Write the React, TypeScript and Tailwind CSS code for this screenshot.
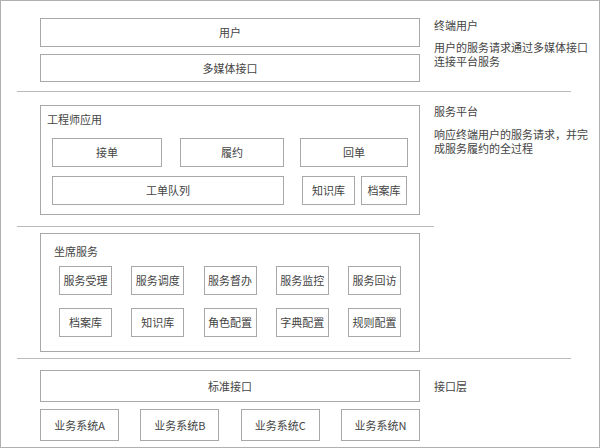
import React from "react";

const B = ({ children, className = "" }: { children: React.ReactNode; className?: string }) => (
  <div className={"border border-[#a8a8a8] flex items-center justify-center text-[11px] text-[#444] bg-white " + className}>{children}</div>
);

export default function App() {
  return (
    <div className="w-[600px] h-[448px] border border-[#b0b0b0] bg-white relative overflow-hidden" style={{ fontFamily: '"Noto Sans CJK SC", "Noto Sans", sans-serif' }}>
      <div className="flex pt-[17px]">
        <div className="ml-[39px] w-[380px] flex flex-col gap-[7px]">
          <B className="h-[29px]">用户</B>
          <B className="h-[28px]">多媒体接口</B>
        </div>
        <div className="ml-[14px] text-[11px] text-[#444] leading-[14px]">
          <div className="mt-[0px]">终端用户</div>
          <div className="mt-[8px]">用户的服务请求通过多媒体接口</div>
          <div>连接平台服务</div>
        </div>
      </div>
      <div className="mt-[9px] ml-[16px] w-[554px] h-px bg-[#bbb]" />
      <div className="flex mt-[13px]">
        <div className="ml-[39px] w-[380px] h-[110px] border border-[#a8a8a8] px-[11px]">
          <div className="text-[11px] text-[#444] mt-[6px] ml-[-5px] leading-[14px]">工程师应用</div>
          <div className="flex mt-[12px] h-[29px]">
            <B className="w-[110px]">接单</B>
            <B className="w-[104px] ml-[18px]">履约</B>
            <B className="w-[108px] ml-[16px]">回单</B>
          </div>
          <div className="flex mt-[9px] h-[29px]">
            <B className="w-[232px]">工单队列</B>
            <B className="w-[53px] ml-[18px]">知识库</B>
            <B className="w-[46px] ml-[6px]">档案库</B>
          </div>
        </div>
        <div className="ml-[14px] text-[11px] text-[#444] leading-[14px]">
          <div className="mt-[-1px]">服务平台</div>
          <div className="mt-[9px]">响应终端用户的服务请求，并完</div>
          <div>成服务履约的全过程</div>
        </div>
      </div>
      <div className="mt-[11px] ml-[16px] w-[417px] h-px bg-[#bbb]" />
      <div className="ml-[39px] mt-[6px] w-[380px] h-[119px] border border-[#a8a8a8] px-[18px]">
        <div className="text-[11px] text-[#444] mt-[10px] ml-[-5px] leading-[14px]">坐席服务</div>
        <div className="flex justify-between mt-[8px] h-[29px]">
          {["服务受理", "服务调度", "服务督办", "服务监控", "服务回访"].map((t) => (
            <B key={t} className="w-[53px]">{t}</B>
          ))}
        </div>
        <div className="flex justify-between mt-[13px] h-[29px]">
          {["档案库", "知识库", "角色配置", "字典配置", "规则配置"].map((t) => (
            <B key={t} className="w-[53px]">{t}</B>
          ))}
        </div>
      </div>
      <div className="mt-[6px] ml-[16px] w-[554px] h-px bg-[#bbb]" />
      <div className="flex mt-[11px]">
        <div className="ml-[39px] w-[380px] flex flex-col gap-[7px]">
          <B className="h-[32px]">标准接口</B>
          <div className="flex justify-between h-[32px]">
            {["业务系统A", "业务系统B", "业务系统C", "业务系统N"].map((t) => (
              <B key={t} className="w-[79px]">{t}</B>
            ))}
          </div>
        </div>
        <div className="ml-[14px] text-[11px] text-[#444] leading-[14px] mt-[9px]">接口层</div>
      </div>
    </div>
  );
}
